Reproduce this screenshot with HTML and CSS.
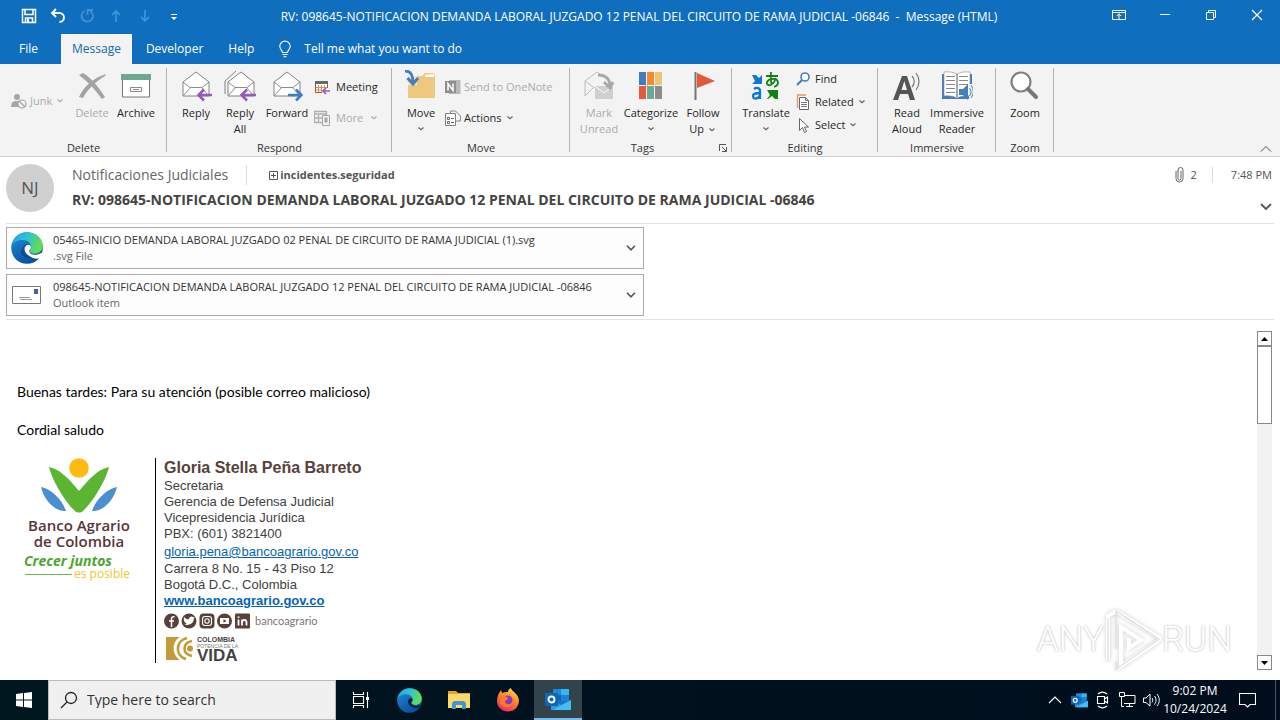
FILE: index.html
```html
<!DOCTYPE html>
<html lang="en">
<head>
<meta charset="utf-8">
<meta name="viewport" content="width=device-width, initial-scale=1">
<title>Message (HTML)</title>
<link rel="stylesheet" href="styles.css">
</head>
<body>
<svg class="defs" aria-hidden="true">
  <defs>
    <linearGradient id="edgeTop" x1="0" y1="0" x2="1" y2="0.3"><stop offset="0" stop-color="#1b9de2"/><stop offset=".5" stop-color="#2cc3d5"/><stop offset="1" stop-color="#62dc55"/></linearGradient>
    <linearGradient id="edgeLow" x1="0" y1="0" x2=".7" y2="1"><stop offset="0" stop-color="#1d8fdc"/><stop offset="1" stop-color="#0b4a99"/></linearGradient>
    <linearGradient id="fox" x1=".8" y1="0" x2=".3" y2="1"><stop offset="0" stop-color="#ffe14a"/><stop offset=".45" stop-color="#ff8a27"/><stop offset="1" stop-color="#f0246a"/></linearGradient>
    <symbol id="chev" viewBox="0 0 10 6"><path d="M2.500 1.500 5 3.800 7.500 1.500" fill="none" stroke="currentColor" stroke-width="1.200"/></symbol>
    <symbol id="edge" viewBox="0 0 32 32">
      <circle cx="16" cy="16" r="15.800" fill="url(#edgeLow)"/>
      <path d="M.3 15C1.500 6 8 .2 16 .2c9 0 15.800 6 15.800 13.500 0 5-4 8-8.300 8-3.500 0-5-1.600-5-3 0-1.200 1.600-1.800 1.600-4.500C20 11 16 8 11 8 6 8 1.500 11 .3 15z" fill="url(#edgeTop)"/>
      <path d="M10 21c0-5 3-8.500 6.500-8.500 2 0 3.500 1 3.500 3 0 1.500-1.700 2.200-1.700 3.700 0 2 3 3.500 6 3.200 2.500-.2 4-1 5.500-2-1 4-4 6-8 6-6 0-10-1-11.800-5.400z" fill="#0b4c9c"/>
      <path d="M13.500 17c0-2.500 2-4.300 4-4.300 1.500 0 2.500 1 2.500 2.600 0 1.500-1.700 2.200-1.700 3.900 0 2.300 3.200 3.800 6.500 3.500 2.300-.2 4-.9 5.700-2l1.500.3-2 4.800c-3.500 1.400-7 1-10-.8-4-2.200-6.500-4.500-6.500-8z" fill="#fff"/>
    </symbol>
    <symbol id="edgeTask" viewBox="0 0 32 32">
      <circle cx="16" cy="16" r="15.800" fill="url(#edgeLow)"/>
      <path d="M.3 15C1.500 6 8 .2 16 .2c9 0 15.800 6 15.800 13.500 0 5-4 8-8.300 8-3.500 0-5-1.600-5-3 0-1.200 1.600-1.800 1.600-4.500C20 11 16 8 11 8 6 8 1.500 11 .3 15z" fill="url(#edgeTop)"/>
      <path d="M14 17c0-2.500 2-4 3.800-4 1.300 0 2.200 1 2.200 2.300 0 1.500-1.700 2.200-1.700 3.900 0 2.300 3.200 3.800 6.500 3.500 2.300-.2 3.500-.9 5.200-1.500l-2.500 4c-8 1.500-13.500-3-13.500-8.200z" fill="#06233f"/>
    </symbol>
    <symbol id="outlook" viewBox="0 0 26 24">
      <path d="M8 2h16v17H8z" fill="#1a73c4"/><path d="M8 2h8v6H8z" fill="#1c8ada"/><path d="M16 2h8v6h-8z" fill="#35b8f1"/><path d="M16 8h8v6h-8z" fill="#1b83d6"/><path d="M8 8h8v6H8z" fill="#1265b3"/>
      <path d="M6 23V13l10 5 10-5v10z" fill="#2a9ee4"/><path d="m8 23 18-10v10z" fill="#45bff0"/>
      <path d="M0 6h13v13H0z" fill="#0e66ba"/><circle cx="6.500" cy="12.500" r="3" fill="none" stroke="#fff" stroke-width="1.900"/>
    </symbol>
    <symbol id="envelope" viewBox="0 0 32 32"><path d="M3 12 16 2l13 10v14H3z" fill="#fff" stroke="#828282"/><path d="m3 12 7 5.500h12l7-5.500M3.500 25.500l7-8M28.500 25.500l-7-8" fill="none" stroke="#8d8d8d"/></symbol>
  </defs>
</svg>

<header class="window-head">
  <div class="titlebar">
    <div class="quick">
      <button aria-label="Save"><svg width="16" height="16" viewBox="0 0 16 16"><path d="M1.500 1.500h13v13h-13zM4 2v4.500h8V2M4.500 14v-4h7v4" fill="none" stroke="#fff" stroke-width="1.500"/><path d="M6 11h2v3H6z" fill="#fff"/></svg></button>
      <button aria-label="Undo"><svg width="16" height="16" viewBox="0 0 16 16"><path d="M6 1 2 5l4 4M2 5h7.500a4.500 4.500 0 0 1 0 9" fill="none" stroke="#fff" stroke-width="1.900"/></svg></button>
      <button aria-label="Redo" disabled><svg width="16" height="16" viewBox="0 0 16 16"><path d="M5.500 3A5.700 5.700 0 1 0 11 3M8.500 7V2H14" fill="none" stroke="#3e92d8" stroke-width="1.800"/></svg></button>
      <button aria-label="Previous item" disabled><svg width="16" height="16" viewBox="0 0 16 16"><path d="M8 14V3M4 7l4-4 4 4" fill="none" stroke="#3e92d8" stroke-width="1.800"/></svg></button>
      <button aria-label="Next item" disabled><svg width="16" height="16" viewBox="0 0 16 16"><path d="M8 2v11M4 9l4 4 4-4" fill="none" stroke="#3e92d8" stroke-width="1.800"/></svg></button>
      <button aria-label="Customize toolbar"><svg width="16" height="16" viewBox="0 0 16 16"><path d="M5 6.500h6" stroke="#fff"/><path d="M5 9h6l-3 3z" fill="#fff"/></svg></button>
    </div>
    <h1 class="caption">RV: 098645-NOTIFICACION DEMANDA LABORAL JUZGADO 12 PENAL DEL CIRCUITO DE RAMA JUDICIAL -06846 &nbsp;-&nbsp; Message (HTML)</h1>
    <div class="window-buttons">
      <button aria-label="Ribbon display options"><svg width="14" height="12" viewBox="0 0 14 12"><path d="M.5 1.500h13v9H.5zM.5 3.500h13M7 10V5M4.800 7 7 4.800 9.200 7" fill="none" stroke="#fff"/></svg></button>
      <button aria-label="Minimize"><svg width="12" height="12" viewBox="0 0 12 12"><path d="M1 5.500h10" stroke="#fff"/></svg></button>
      <button aria-label="Restore"><svg width="12" height="12" viewBox="0 0 12 12"><path d="M1.500 3.500h7v7h-7zM3.500 3V1.500h7v7H9" fill="none" stroke="#fff"/></svg></button>
      <button aria-label="Close"><svg width="12" height="12" viewBox="0 0 12 12"><path d="m1 1 10 10M11 1 1 11" stroke="#fff" stroke-width="1.200"/></svg></button>
    </div>
  </div>
  <nav class="tabs">
    <button class="tab tab-file">File</button>
    <button class="tab tab-active">Message</button>
    <button class="tab">Developer</button>
    <button class="tab">Help</button>
    <label class="tell"><svg width="16" height="18" viewBox="0 0 16 18"><path d="M5.500 12.500c0-2-2.700-3-2.700-6.200a5.200 5.200 0 0 1 10.400 0c0 3.200-2.700 4.200-2.700 6.200zM5.500 14.500h5M6.500 16.700h3" fill="none" stroke="#fff" stroke-width="1.100"/></svg><input type="text" placeholder="Tell me what you want to do" aria-label="Tell me what you want to do"></label>
  </nav>
</header>

<div class="ribbon">
  <section class="group g-delete">
    <div class="tools">
      <div class="stack stack-one">
        <button class="small" disabled><svg width="16" height="16" viewBox="0 0 16 16"><circle cx="6" cy="4" r="3" fill="#a6a6a6"/><path d="M0 14c0-4 2-6 5-6h3v6z" fill="#a6a6a6"/><circle cx="11" cy="11" r="4" fill="#f3f3f3" stroke="#a6a6a6" stroke-width="1.200"/><path d="m8 8 6 6" stroke="#a6a6a6" stroke-width="1.200"/></svg>Junk<svg class="chev"><use href="#chev"/></svg></button>
      </div>
      <button class="big w40" disabled><svg width="32" height="32" viewBox="0 0 32 32"><path d="m3 5 4-2c6 3 15 13 22 24l-3 2C19 19 11 11 3 5z" fill="#a3a3a3"/><path d="M30 4 29 6C19 12 12 19 7 28l-4-1C8 16 17 8 30 4z" fill="#a3a3a3"/></svg><span>Delete</span></button>
      <button class="big w48"><svg width="32" height="32" viewBox="0 0 32 32"><path d="M2.500 9h27v18h-27z" fill="#fff" stroke="#777"/><path d="M1 4h30v6H1z" fill="#6fa892"/><path d="M10.500 17.500h11v4h-11zM13 19.500h6" fill="none" stroke="#888"/></svg><span>Archive</span></button>
    </div>
    <h2>Delete</h2>
  </section>
  <section class="group g-respond">
    <div class="tools">
      <button class="big w44"><svg width="32" height="32" viewBox="0 0 32 32"><use href="#envelope"/><path d="M32 25H19M24 19.500 18.500 25l5.500 5.500" fill="none" stroke="#9459be" stroke-width="2.600"/></svg><span>Reply</span></button>
      <button class="big w44"><svg width="32" height="32" viewBox="0 0 32 32"><path d="M1 24V11L12 1" fill="none" stroke="#828282"/><use href="#envelope" x="1"/><path d="M32 25H18M23 19.500 17.500 25l5.500 5.500" fill="none" stroke="#9459be" stroke-width="2.600"/></svg><span>Reply<br>All</span></button>
      <button class="big w50"><svg width="32" height="32" viewBox="0 0 32 32"><use href="#envelope"/><path d="M17 25h13M25 19.500l5.500 5.500-5.500 5.500" fill="none" stroke="#3f7ec0" stroke-width="2.600"/></svg><span>Forward</span></button>
      <div class="stack">
        <button class="small"><svg width="16" height="16" viewBox="0 0 16 16"><path d="M1.500 2.500h12v11h-12z" fill="#fff" stroke="#a05a32"/><path d="M1 2h13v3H1z" fill="#666"/><path d="M4.500 6v7M7.500 6v7M10.500 6v6M2 8.500h11M2 11h7" stroke="#d89054"/><path d="M8 9h8v7H8z" fill="#f3f3f3"/><path d="M16 12H9M12 9l-3 3 3 3" fill="none" stroke="#9459be" stroke-width="1.700"/></svg>Meeting</button>
        <button class="small" disabled><svg width="16" height="16" viewBox="0 0 16 16"><path d="M.5 1.500h12v11H.5zM.5 4h12M4.500 4v8M.5 8h8" fill="none" stroke="#b0b0b0" stroke-width="1.300"/><path d="M8.500 5.500h7v10h-7z" fill="#f3f3f3" stroke="#a6a6a6"/><path d="M10.500 7.500h3v5h-3z" fill="#a6a6a6"/></svg>More<svg class="chev"><use href="#chev"/></svg></button>
      </div>
    </div>
    <h2>Respond</h2>
  </section>
  <section class="group g-move">
    <div class="tools">
      <button class="big w44"><svg width="32" height="32" viewBox="0 0 32 32"><path d="M3 6h14l3-3h9l1 3v22H3z" fill="#edc87e"/><path d="m20 5 9-1v3h-9z" fill="#fff"/><path d="M0 0h12v15H0z" fill="#f3f3f3" opacity=".7"/><path d="M0 1c6 0 8 4 8 12M2.500 8 8 14l5-6" fill="none" stroke="#437fbd" stroke-width="3"/></svg><span>Move<svg class="chev row"><use href="#chev"/></svg></span></button>
      <div class="stack">
        <button class="small" disabled><svg width="16" height="16" viewBox="0 0 16 16"><path d="M4 1h11.500v14H4z" fill="#b9b9b9"/><path d="M0 2h11v12H0z" fill="#8e8e8e"/><path d="M3 11.500v-7l5 7v-7" fill="none" stroke="#fff" stroke-width="1.500"/></svg>Send to OneNote</button>
        <button class="small"><svg width="16" height="16" viewBox="0 0 16 16"><path d="M.5 3.500h10v12H.5z" fill="#fff" stroke="#808080"/><path d="M5.500 3V1h5l5 5v5h-5" fill="none" stroke="#888"/><path d="M2.500 7.500h2v2h-2zM2.500 11.500h2v2h-2zM6 8.500h3M6 12.500h3" fill="none" stroke="#666"/></svg>Actions<svg class="chev"><use href="#chev"/></svg></button>
      </div>
    </div>
    <h2>Move</h2>
  </section>
  <section class="group g-tags">
    <div class="tools">
      <button class="big w44" disabled><svg width="32" height="32" viewBox="0 0 32 32"><path d="M2 11 14 2l12 9M2 11v15l8-8 4-2M2 11l8 6" fill="none" stroke="#bcbcbc"/><path d="M12 16h18v13H12z" fill="#cfcfcf"/><path d="m12 16 9 7 9-7" fill="none" stroke="#fff"/><path d="M15 5c9 0 12 4 12 12M21 12l6 6 3-6" fill="none" stroke="#a9a9a9" stroke-width="3"/></svg><span>Mark<br>Unread</span></button>
      <button class="big w60"><svg width="32" height="32" viewBox="0 0 32 32"><path d="M4 2h7v13H4z" fill="#3f7dbc"/><path d="M12 2h7v13h-7z" fill="#f08a33"/><path d="M20 2h7v13h-7z" fill="#edc374"/><path d="M4 16h7v13H4z" fill="#e3593a"/><path d="M12 16h7v13h-7z" fill="#6fa892"/><path d="M20 16h7v13h-7z" fill="#8c8c8c"/></svg><span>Categorize<svg class="chev row"><use href="#chev"/></svg></span></button>
      <button class="big w44"><svg width="32" height="32" viewBox="0 0 32 32"><path d="M8.500 2v28" stroke="#777" stroke-width="2"/><path d="m10 3 18 8-18 7z" fill="#e2593b"/></svg><span>Follow<br>Up <svg class="chev"><use href="#chev"/></svg></span></button>
    </div>
    <div class="group-foot"><h2>Tags</h2><button class="launcher" aria-label="Tags options"><svg width="8" height="8" viewBox="0 0 8 8"><path d="M.5 7V.5H7M3 3l4 4M7.500 3v4.500H3" fill="none" stroke="#555"/></svg></button></div>
  </section>
  <section class="group g-editing">
    <div class="tools">
      <button class="big w54"><svg width="32" height="32" viewBox="0 0 32 32"><path d="M2 5h4l3 3 3-3v9H2l3-3z" fill="#0e76d6"/><path d="M28 20v9h-3l-3-3-4 3h-1l3-4-3-5z" fill="#138017"/><path d="M16 6h12M21 2c-.5 5-.5 9 1 13M26 8c-2 5-5 8-8 7-3-2 0-6 4-6 7-1 8 6 2 8" fill="none" stroke="#138017" stroke-width="1.800"/><path d="M4 19c3-2 6-1 6 2v8M10 23c-5 0-7 1-7 3 0 4 6 3 7-1" fill="none" stroke="#0e76d6" stroke-width="2.300"/></svg><span>Translate<svg class="chev row"><use href="#chev"/></svg></span></button>
      <div class="stack stack-three">
        <button class="small"><svg width="16" height="16" viewBox="0 0 16 16"><circle cx="9" cy="6" r="4" fill="#fff" stroke="#437fbd" stroke-width="1.600"/><path d="m6 9-5 5" stroke="#437fbd" stroke-width="2.200"/></svg>Find</button>
        <button class="small"><svg width="16" height="16" viewBox="0 0 16 16"><path d="M1.500 14V1H10" fill="none" stroke="#e39a5a" stroke-width="1.300"/><path d="M3.500 3.500h6l3 3v9h-9z" fill="#fff" stroke="#666"/><path d="M9.500 3.500v3h3M5 8.500h6M5 10.500h6M5 12.500h6" fill="none" stroke="#777"/></svg>Related<svg class="chev"><use href="#chev"/></svg></button>
        <button class="small"><svg width="16" height="16" viewBox="0 0 16 16"><path d="M3.500 1.500v12l3-3 2 5 2-1-2-4.500h4z" fill="#fff" stroke="#666"/></svg>Select<svg class="chev"><use href="#chev"/></svg></button>
      </div>
    </div>
    <h2>Editing</h2>
  </section>
  <section class="group g-immersive">
    <div class="tools">
      <button class="big w40"><svg width="32" height="32" viewBox="0 0 32 32"><path fill-rule="evenodd" d="M2 30 11 6h5l8 24h-5l-2-6H9l-2 6zM10.500 20H16L13.300 11z" fill="#555"/><path d="M21 6c3 3 3 8 0 11M25 3c4 5 4 12 0 17" fill="none" stroke="#777" stroke-width="1.200"/></svg><span>Read<br>Aloud</span></button>
      <button class="big w60"><svg width="32" height="32" viewBox="0 0 32 32"><path d="M1 4h30v25H1z" fill="#437fbd"/><path d="M3 2c5-.5 9 0 13 2 4-2 8-2.500 13-2v24c-5-.5-9 0-13 2-4-2-8-2.500-13-2z" fill="#fff" stroke="#8c8c8c" stroke-width=".6"/><path d="M16 4v23" stroke="#555"/><path d="M5 6.500h9M5 10.500h9M5 14.500h9M5 18.500h9M5 22.500h9M18 6.500h9M18 10.500h9M18 14.500h9" stroke="#888"/><path d="M18 19h4l5-5v16l-5-5h-4z" fill="#437fbd"/><path d="M28 14h4v16h-4z" fill="#f3f3f3"/><path d="M28.500 18c2 3 2 5 0 8M30 15c3 5 3 9 0 13" fill="none" stroke="#437fbd"/></svg><span>Immersive<br>Reader</span></button>
    </div>
    <h2>Immersive</h2>
  </section>
  <section class="group g-zoom">
    <div class="tools">
      <button class="big w44"><svg width="32" height="32" viewBox="0 0 32 32"><circle cx="12" cy="12" r="9.500" fill="#fff" stroke="#808080" stroke-width="2.200"/><path d="m19 19 8 8" stroke="#777" stroke-width="4" stroke-linecap="round"/></svg><span>Zoom</span></button>
    </div>
    <h2>Zoom</h2>
  </section>
  <button class="collapse" aria-label="Collapse the ribbon"><svg width="12" height="8" viewBox="0 0 12 8"><path d="m1 6.500 5-5 5 5" fill="none" stroke="#555"/></svg></button>
</div>

<main class="mail">
  <div class="mail-head">
    <div class="avatar">NJ</div>
    <div class="who">
      <div class="from-row">
        <span class="sender">Notificaciones Judiciales</span>
        <span class="recipient"><svg width="9" height="9" viewBox="0 0 9 9"><path d="M.5.500h8v8h-8zM2 4.500h5M4.500 2v5" fill="none" stroke="#555"/></svg>incidentes.seguridad</span>
      </div>
      <p class="subject">RV: 098645-NOTIFICACION DEMANDA LABORAL JUZGADO 12 PENAL DEL CIRCUITO DE RAMA JUDICIAL -06846</p>
    </div>
    <div class="meta">
      <div class="meta-row"><span class="clips"><svg width="9" height="16" viewBox="0 0 9 16"><path d="M6 4v7.500a1.500 1.500 0 0 1-3 0V4M3 4.500V3a2.500 2.500 0 0 1 5 0v8.500a3.500 3.500 0 0 1-7 0V4" fill="none" stroke="#666"/></svg>2</span><time>7:48 PM</time></div>
      <button class="expand" aria-label="Expand header"><svg width="12" height="8" viewBox="0 0 12 8"><path d="m1 1 5 5 5-5" fill="none" stroke="#555" stroke-width="1.800"/></svg></button>
    </div>
  </div>
  <div class="attachments">
    <div class="attachment">
      <svg width="32" height="32"><use href="#edge"/></svg>
      <div class="file"><p>05465-INICIO DEMANDA LABORAL JUZGADO 02 PENAL DE CIRCUITO DE RAMA JUDICIAL (1).svg</p><small>.svg File</small></div>
      <button aria-label="Attachment options"><svg width="10" height="6" viewBox="0 0 10 6"><path d="m1 .8 4 4 4-4" fill="none" stroke="#555" stroke-width="1.600"/></svg></button>
    </div>
    <div class="attachment">
      <svg width="32" height="32" viewBox="0 0 32 32"><path d="M1.500 7.500h28v17h-28z" fill="#fff" stroke="#777"/><path d="M23 10h4v5h-4z" fill="#3d64ae"/><path d="M8 18.500h11M9 20.500h12" stroke="#999"/></svg>
      <div class="file"><p>098645-NOTIFICACION DEMANDA LABORAL JUZGADO 12 PENAL DEL CIRCUITO DE RAMA JUDICIAL -06846</p><small>Outlook item</small></div>
      <button aria-label="Attachment options"><svg width="10" height="6" viewBox="0 0 10 6"><path d="m1 .8 4 4 4-4" fill="none" stroke="#555" stroke-width="1.600"/></svg></button>
    </div>
  </div>
  <div class="reading">
    <article class="letter">
      <p>Buenas tardes: Para su atención (posible correo malicioso)</p>
      <p>Cordial saludo</p>
      <div class="signature">
        <div class="bank">
          <svg width="78" height="56" viewBox="0 0 78 56"><circle cx="39" cy="10" r="9.800" fill="#fdbb12"/><path d="M9 9c11 2 21 13 30 24 9-11 19-22 30-24-3 13-16 35-26 44-2 2-6 2-8 0C25 44 12 22 9 9z" fill="#5cb531"/><path d="M1 29c10 2 21 12 25 24C15 54 4 42 1 29zM77 29c-10 2-21 12-25 24 11 1 22-11 25-24z" fill="#4a8fd0"/></svg>
          <strong>Banco Agrario<br>de Colombia</strong>
          <em>Crecer juntos</em>
          <span class="slogan">es posible</span>
        </div>
        <address class="contact">
          <b class="name">Gloria Stella Peña Barreto</b>
          <span>Secretaria</span>
          <span>Gerencia de Defensa Judicial</span>
          <span>Vicepresidencia Jurídica</span>
          <span>PBX: (601) 3821400</span>
          <a class="email" href="mailto:gloria.pena@bancoagrario.gov.co">gloria.pena@bancoagrario.gov.co</a>
          <span>Carrera 8 No. 15 - 43 Piso 12</span>
          <span>Bogotá D.C., Colombia</span>
          <a class="site" href="#">www.bancoagrario.gov.co</a>
          <div class="social">
            <svg width="87" height="16" viewBox="0 0 87 16"><g fill="#57413a"><circle cx="7.500" cy="8" r="7.500"/><circle cx="25" cy="8" r="7.500"/><rect x="35.500" y=".5" width="15" height="15" rx="4"/><circle cx="60.500" cy="8" r="7.500"/><rect x="71" y=".5" width="15" height="15" rx="1"/></g><g fill="none" stroke="#fff" stroke-width="1.500"><path d="M10.500 3.800C8 3.500 7.500 4.500 7.500 6v8M5 8h5"/><rect x="38.500" y="3.500" width="9" height="9" rx="2.500" stroke-width="1.100"/><circle cx="43" cy="8" r="2.200" stroke-width="1.100"/><path d="M74.500 6.500v6M78 12.500v-6M78 9c1-3 4.500-2.500 4.500.5v3M74.500 3.500v1.500" stroke-width="1.800"/></g><path d="M20 4c2 2 3.500 2.300 5 2.300 0-3 3-3.500 4.300-2l1.500-.4-1 1.700C30 10 26 13 20 11.500c1.500 0 2-.5 2.500-1C20 9.500 19.300 6.500 20 4zM56 5h9v6h-9z" fill="#fff"/><path d="m59.500 6.300 3 1.700-3 1.700z" fill="#57413a"/></svg>
            <span>bancoagrario</span>
          </div>
          <div class="vida">
            <svg width="27" height="25" viewBox="0 0 27 25"><path d="M0 1h14C6 5 5 18 14 24H0z" fill="#c49b39"/><g fill="none" stroke="#c49b39" stroke-width="2.600"><path d="M21 2C9 5 9 20 20 23M26 5c-10 2-10 13 0 15"/></g><circle cx="24" cy="12.500" r="3" fill="#c49b39"/></svg>
            <div><b>COLOMBIA</b><small>POTENCIA DE LA</small><strong>VIDA</strong></div>
          </div>
        </address>
      </div>
    </article>
    <div class="scrollbar"><button aria-label="Scroll up"><svg width="7" height="4" viewBox="0 0 7 4"><path d="M0 4h7L3.500 0z"/></svg></button><div class="thumb"></div><button class="down" aria-label="Scroll down"><svg width="7" height="4" viewBox="0 0 7 4"><path d="M0 0h7L3.500 4z"/></svg></button></div>
    <div class="watermark">
      <span>ANY</span>
      <svg width="58" height="64" viewBox="0 0 58 64"><path d="M12 3 54 29c2 1 2 3 0 4L17 58V19l20 13-12 8V30M4 53V8l8-5" fill="none" stroke="#fff" stroke-width="4"/><path d="M12 3v38M12 3l43 28-43 30v-8M4 53V10" fill="none" stroke="#e2e2e2" stroke-width="1.500"/></svg>
      <span>RUN</span>
    </div>
  </div>
</main>

<footer class="taskbar">
  <button class="start" aria-label="Start"><svg width="16" height="16" viewBox="0 0 16 16"><path d="m0 2 7-1v6.500H0zM8 1l8-1v7.500H8zM0 8.500h7V15l-7-1zM8 8.500h8V16l-8-1z" fill="#fff"/></svg></button>
  <label class="search"><svg width="18" height="18" viewBox="0 0 18 18"><circle cx="11" cy="7" r="5.500" fill="none" stroke="#222" stroke-width="1.300"/><path d="m7 11-6 6" stroke="#222" stroke-width="1.300"/></svg><input type="text" placeholder="Type here to search" aria-label="Type here to search"></label>
  <div class="apps">
    <button aria-label="Task view"><svg width="18" height="16" viewBox="0 0 18 16"><path d="M1.500 0v2.500h10V0M1.500 16v-2.500h10V16M1.500 4.500h10v7h-10zM15.500 0v16" fill="none" stroke="#fff" stroke-width="1.100"/><path d="M14 5h3v3h-3z" fill="#fff"/></svg></button>
    <button aria-label="Edge"><svg width="25" height="25"><use href="#edgeTask"/></svg></button>
    <button aria-label="File Explorer"><svg width="22" height="20" viewBox="0 0 22 20"><path d="M0 1h8l2 2h12v15H0z" fill="#e5a52d"/><path d="M0 4h22v14H0z" fill="#ffd968"/><path d="M4 19v-6l2-2h10l2 2v6h-4v-4H8v4z" fill="#3d99d4"/></svg></button>
    <button aria-label="Firefox"><svg width="24" height="24" viewBox="0 0 24 24"><path d="M1 13C1 8 3 5 5 2l1 3c2-1 4-1 6-1 0-2 1-3 3-4 0 3 7 5 8 12 0 7-5 11.500-11 11.500S1 19 1 13z" fill="url(#fox)"/><circle cx="12" cy="12" r="4.500" fill="#8938ca"/><path d="M6 9c3-1 5 0 6 1 0 2-3 2-3 4 1 3 5 3 7 1-1 5-10 6-12 0z" fill="#ff7a27"/></svg></button>
    <button class="running" aria-label="Outlook"><svg width="26" height="24"><use href="#outlook"/></svg></button>
  </div>
  <div class="tray">
    <button aria-label="Show hidden icons"><svg width="14" height="8" viewBox="0 0 14 8"><path d="m1 7 6-6 6 6" fill="none" stroke="#fff" stroke-width="1.200"/></svg></button>
    <button aria-label="Outlook"><svg width="17" height="16"><use href="#outlook"/></svg></button>
    <button aria-label="Meet now"><svg width="14" height="18" viewBox="0 0 14 18"><path d="M2 3c3-2.500 6-2.500 9 0M2 15c3 2.500 6 2.500 9 0M1.500 5.500h7v7h-7zM8.500 8l3-2v6l-3-2" fill="none" stroke="#fff" stroke-width="1.100"/></svg></button>
    <button aria-label="Network"><svg width="17" height="16" viewBox="0 0 17 16"><path d="M5 3.500h11v8H5M10.500 12v3M7 14.500h7M.5.500h5v4h-5zM2.500 5v9.500H5" fill="none" stroke="#fff"/></svg></button>
    <button aria-label="Volume"><svg width="17" height="14" viewBox="0 0 17 14"><path d="M.5 5h2.500l4-4v12L3 9.500H.5zM9 5c1 1.500 1 3 0 4.500M11.500 3c2 2.500 2 6 0 8.500M14 1c3 4 3 8.500 0 12" fill="none" stroke="#fff"/></svg></button>
  </div>
  <div class="clock"><time>9:02 PM</time><time>10/24/2024</time></div>
  <button class="notify" aria-label="Notifications"><svg width="17" height="17" viewBox="0 0 17 17"><path d="M.5 1.500h16v11H11L8.500 15 6 12.500H.5z" fill="none" stroke="#fff" stroke-width="1.100"/></svg></button>
  <button class="desktop" aria-label="Show desktop"></button>
</footer>
</body>
</html>
```

FILE: styles.css
```css
* { box-sizing: border-box; }
body {
  margin: 0;
  min-height: 100vh;
  display: flex;
  flex-direction: column;
  font-family: "Open Sans", "Noto Sans", sans-serif;
  font-size: 11px;
  line-height: 16px;
  color: #262626;
  background: #fff;
}
button, input {
  font: inherit;
  color: inherit;
  background: none;
  border: 0;
  padding: 0;
  margin: 0;
}
h1, h2, p { margin: 0; font-size: inherit; font-weight: 400; }
svg { display: block; flex: none; }
.defs { position: absolute; width: 0; height: 0; }

/* Title bar and tabs */
.window-head { background: #106ebe; color: #fff; }
.titlebar { display: flex; height: 34px; justify-content: space-between; }
.quick { display: flex; gap: 13px; padding: 0 0 2px 21px; align-items: center; }
.caption { font-size: 12px; line-height: 34px; white-space: nowrap; }
.window-buttons { display: flex; height: 30px; }
.window-buttons button { width: 46px; display: grid; place-items: center; }
.tabs { display: flex; height: 30px; font-size: 12px; }
.tab { padding: 0 11px 0 14px; }
.tab-file { width: 61px; padding: 0 4px 0 0; }
.tab-active { background: #f3f3f3; color: #1667ad; padding: 0 11px; }
.tell { display: flex; align-items: center; gap: 11px; flex: 1; padding-left: 12px; }
.tell input { flex: 1; max-width: 240px; }
.tell input::placeholder { color: #fff; opacity: 1; }

/* Ribbon */
.ribbon {
  display: flex;
  height: 93px;
  background: #f3f3f3;
  border-bottom: 1px solid #cfcfcf;
}
.group {
  display: flex;
  flex-direction: column;
  justify-content: space-between;
  flex: none;
  padding-top: 6px;
  background: linear-gradient(#b4b4b4, #b4b4b4) right center / 1px calc(100% - 8px) no-repeat;
}
.g-delete { width: 167px; }
.g-respond { width: 225px; }
.g-move { width: 178px; }
.g-tags { width: 162px; }
.g-editing { width: 146px; }
.g-immersive { width: 118px; }
.g-zoom { width: 58px; }
.group h2 { text-align: center; color: #333; flex: 1; }
.group > h2 { flex: none; }
.group-foot { display: flex; align-items: center; }
.launcher { width: 17px; padding-left: 4px; }
.tools { display: flex; padding-left: 7px; }
.g-delete .tools { padding-left: 10px; }
.g-immersive .tools { padding-left: 9px; }
.g-respond .small { gap: 6px; }
.big { display: flex; flex-direction: column; align-items: center; gap: 3px; text-align: center; }
.big > span { white-space: nowrap; }
.w40 { width: 40px; }
.w44 { width: 44px; }
.w48 { width: 48px; }
.w50 { width: 50px; }
.w54 { width: 54px; }
.w60 { width: 60px; }
.stack { display: flex; flex-direction: column; gap: 15px; padding: 9px 0 0 2px; }
.stack-one { width: 62px; padding: 23px 0 0 1px; }
.stack-three { gap: 7px; padding: 1px 0 0 3px; }
.small { display: flex; align-items: center; gap: 3px; height: 16px; white-space: nowrap; }
.small:disabled, .big:disabled { color: #ababab; }
.chev { display: inline-block; width: 10px; height: 6px; color: #666; vertical-align: middle; }
.row { display: block; margin: 5px auto; }
.small:disabled .chev { color: #ababab; }
.collapse { margin: auto 8px 3px auto; }

/* Message header */
.mail { flex: 1; display: flex; flex-direction: column; padding: 0 6px; }
.mail-head { display: flex; border-bottom: 1px solid #e1e1e1; padding: 7px 0 9px; }
.avatar {
  width: 48px;
  height: 48px;
  border-radius: 50%;
  background: #d0d0d0;
  color: #555;
  font-size: 17px;
  line-height: 48px;
  text-align: center;
}
.who { flex: 1; padding-left: 18px; }
.from-row { display: flex; align-items: center; height: 22px; }
.sender { font-size: 14px; color: #666; padding-right: 18px; border-right: 1px solid #dcdcdc; line-height: 20px; }
.recipient { display: flex; align-items: center; gap: 2px; padding-left: 22px; font-weight: 700; color: #555; }
.subject { font-size: 14px; font-weight: 700; line-height: 28px; color: #444; white-space: nowrap; }
.meta { color: #555; display: flex; flex-direction: column; align-items: flex-end; gap: 17px; padding-right: 2px; }
.meta-row { display: flex; align-items: center; height: 22px; }
.clips { display: flex; align-items: center; gap: 7px; padding-right: 15px; border-right: 1px solid #dcdcdc; }
.meta time { padding-left: 18px; }
.attachments {
  display: flex;
  flex-direction: column;
  gap: 5px;
  padding: 3px 0;
  border-bottom: 1px solid #e1e1e1;
}
.attachment {
  display: flex;
  align-items: center;
  width: 50.300%;
  height: 42px;
  padding: 0 7px 0 4px;
  border: 1px solid #ababab;
  background: #fdfdfd;
}
.file { flex: 1; min-width: 0; padding-left: 10px; color: #333; white-space: nowrap; }
.file small { display: block; font-size: 11px; color: #666; }

/* Message body */
.reading { position: relative; flex: 1; display: flex; justify-content: space-between; padding: 11px 2px 10px 11px; }
.letter { padding-top: 51px; font: 14px/20px Lato, "Open Sans", sans-serif; color: #000; }
.letter > p { margin-bottom: 18px; }
.signature { display: flex; }
.bank { width: 138px; display: flex; flex-direction: column; align-items: center; padding-right: 14px; color: #57363a; }
.bank strong { font: 600 15px/16px "Open Sans", sans-serif; text-align: center; white-space: nowrap; padding-top: 3px; }
.bank em { font: italic 700 14px/14px "Open Sans", sans-serif; color: #4da52f; align-self: flex-start; padding: 5px 0 0 7px; }
.slogan { align-self: stretch; display: flex; align-items: center; margin: 0 11px 0 8px; gap: 2px; font: 12px/12px "Open Sans", sans-serif; color: #efc532; }
.slogan::before { content: ""; flex: 1; height: 1px; background: #6cb943; }
.contact { display: flex; flex-direction: column; border-left: 1px solid #000; padding-left: 8px; font: 13px/16px "Liberation Sans", sans-serif; color: #404040; }
.contact .name { font-size: 16px; line-height: 20px; color: #57413a; }
.contact a { color: #0563b0; }
.contact .email { line-height: 19px; }
.site { font-weight: 700; }
.social { display: flex; gap: 4px; align-items: center; padding-top: 4px; }
.social span { font: 11px/16px Lato, sans-serif; color: #777; }
.vida { display: flex; gap: 4px; padding: 7px 0 0 2px; }
.vida div { display: flex; flex-direction: column; color: #444; }
.vida b { font-size: 7px; line-height: 8px; }
.vida small { font-size: 5px; line-height: 5px; color: #777; }
.vida strong { font-size: 17px; line-height: 14px; }
.scrollbar { width: 15px; display: flex; flex-direction: column; background: #f2f2f2; }
.scrollbar button { height: 15px; border: 1px solid #888; background: #fff; display: grid; place-items: center; }
.thumb { height: 78px; border: 1px solid #888; background: #fff; }
.scrollbar .down { margin-top: auto; }
.watermark {
  position: absolute;
  right: 42px;
  bottom: 8px;
  display: flex;
  align-items: center;
  font: 300 35px/60px Roboto, sans-serif;
  color: #fff;
  text-shadow: 0 0 2px #bbb, 0 0 3px #ddd;
}
.watermark svg { filter: drop-shadow(0 0 2px #ccc); }

/* Taskbar */
.taskbar { display: flex; height: 40px; background: linear-gradient(90deg, #00161f, #000d1c); color: #fff; }
.start { width: 48px; display: grid; place-items: center; }
.search { display: flex; align-items: center; gap: 9px; width: 288px; padding-left: 11px; background: #f0f0f0; border: 1px solid #bbb; color: #333; }
.search input { flex: 1; min-width: 0; font-size: 14px; }
.search input::placeholder { color: #333; opacity: 1; }
.apps { display: flex; }
.apps button { width: 49px; display: grid; place-items: center; }
.apps .running { width: 48px; margin-left: 2px; background: #33434c; border-bottom: 2px solid #76b9ed; }
.tray { display: flex; margin-left: auto; }
.tray button { width: 24px; display: grid; place-items: center; }
.clock { width: 64px; font-size: 12px; line-height: 18px; display: flex; flex-direction: column; align-items: center; padding-top: 2px; }
.notify { width: 40px; margin-right: 8px; display: grid; place-items: center; }
.desktop { width: 5px; border-left: 1px solid #4a555e; }
```
